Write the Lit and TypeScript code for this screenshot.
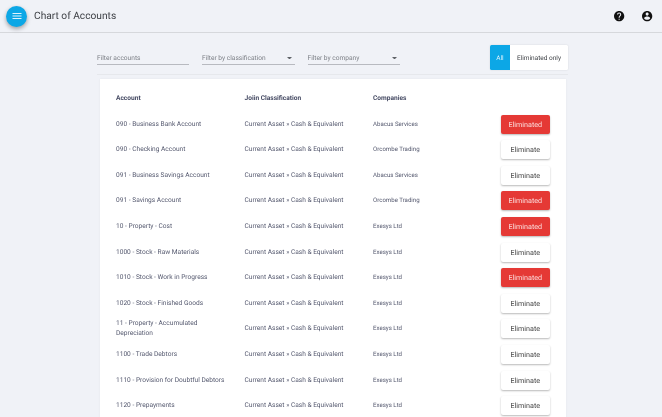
import { LitElement, html, css, svg } from "lit";
import { customElement } from "lit/decorators.js";

const CLS = "Current Asset \u00bb Cash & Equivalent";
const ROWS: [string, string, boolean][] = [
  ["090 - Business Bank Account", "Abacus Services", true],
  ["090 - Checking Account", "Orcombe Trading", false],
  ["091 - Business Savings Account", "Abacus Services", false],
  ["091 - Savings Account", "Orcombe Trading", true],
  ["10 - Property - Cost", "Exesys Ltd", true],
  ["1000 - Stock - Raw Materials", "Exesys Ltd", false],
  ["1010 - Stock - Work in Progress", "Exesys Ltd", true],
  ["1020 - Stock - Finished Goods", "Exesys Ltd", false],
  ["11 - Property - Accumulated Depreciation", "Exesys Ltd", false],
  ["1100 - Trade Debtors", "Exesys Ltd", false],
  ["1110 - Provision for Doubtful Debtors", "Exesys Ltd", false],
  ["1120 - Prepayments", "Exesys Ltd", false],
];

const arrow = svg`<svg class="arrow" viewBox="0 0 10 5" width="5" height="2.5"><path d="M0 0h10L5 5z" fill="#5f6368"/></svg>`;

@customElement("app-root")
export class AppRoot extends LitElement {
  static styles = css`
    :host {
      display: block;
      width: 662px;
      height: 417px;
      overflow: hidden;
      background: #f0f2f7;
      font-family: Roboto, "Liberation Sans", sans-serif;
      color: #54586e;
      text-rendering: geometricPrecision;
    }
    .top {
      height: 33px;
      box-sizing: border-box;
      border-bottom: 1px solid #d6d8dc;
      display: flex;
      align-items: center;
      padding: 0 9px 0 6px;
      will-change: transform;
    }
    .fab {
      width: 21px;
      height: 21px;
      border-radius: 50%;
      background: #0ca7e6;
      box-shadow: 0 2px 4px rgba(0, 0, 0, 0.35);
      display: flex;
      align-items: center;
      justify-content: center;
    }
    .title {
      margin-left: 7px;
      font-size: 10.2px;
      color: #3f4247;
      flex: 1;
    }
    .actions {
      display: flex;
      gap: 15px;
      align-items: center;
    }
    .actions svg {
      display: block;
    }
    .filters {
      box-sizing: border-box;
      margin: 12px 94px 0 97px;
      height: 30px;
      border-bottom: 1px solid #e6e8ec;
      display: flex;
      align-items: flex-start;
      will-change: transform;
    }
    .field {
      height: 15px;
      margin-top: 5px;
      padding-top: 1.5px;
      border-bottom: 1px solid #b8bac0;
      font-size: 6.6px;
      color: #7d8087;
      display: flex;
      align-items: center;
      justify-content: space-between;
      box-sizing: border-box;
    }
    .f1 { width: 92px; margin-right: 13px; }
    .f2 { width: 93px; margin-right: 12.5px; }
    .f3 { width: 92.5px; }
    .arrow { margin-right: 3px; }
    .toggle {
      margin-left: auto;
      height: 25px;
      display: flex;
      align-items: stretch;
      background: #fff;
      border-radius: 1.5px;
      box-shadow: 0 0 2px rgba(0, 0, 0, 0.12);
      font-size: 6.5px;
      color: #3f4247;
    }
    .toggle .all {
      width: 20px;
      background: #0ca7e6;
      color: #dff3fc;
      display: flex;
      align-items: center;
      justify-content: center;
      border-radius: 1.5px 0 0 1.5px;
    }
    .toggle .only {
      width: 58px;
      display: flex;
      align-items: center;
      justify-content: center;
    }
    .card {
      margin: 4px 96px 0 100px;
      background: #fff;
      padding: 6.4px 16px 0;
      box-shadow: 0 0 2px rgba(0, 0, 0, 0.06);
    }
    .row {
      display: grid;
      grid-template-columns: 128.5px 128.5px 1fr 49.5px;
      align-items: center;
      height: 25.6px;
      font-size: 6.6px;
      line-height: 9.6px;
      will-change: transform;
    }
    .head {
      font-weight: 700;
      font-size: 6.6px;
      color: #454a63;
      height: 25.2px;
    }
    .cell {
      padding-top: 1.5px;
    }
    .acc {
      padding-right: 10px;
    }
    .co {
      font-size: 6.1px;
    }
    .btn {
      height: 18.5px;
      margin-top: 1px;
      border-radius: 2px;
      display: flex;
      align-items: center;
      justify-content: center;
      font-size: 7.2px;
      background: #fff;
      color: #444;
      box-shadow: 0 1px 2px rgba(0, 0, 0, 0.28);
    }
    .btn.on {
      background: #e53935;
      color: #fbdcdc;
    }
  `;

  render() {
    return html`
      <div class="top">
        <div class="fab">
          <svg width="12" height="12" viewBox="0 0 24 24"><path fill="#dff3fc" d="M3 18h18v-2H3v2zm0-5h18v-2H3v2zm0-7v2h18V6H3z"/></svg>
        </div>
        <div class="title">Chart of Accounts</div>
        <div class="actions">
          <svg width="12.3" height="12.3" viewBox="0 0 24 24"><path fill="#111" d="M12 2C6.48 2 2 6.48 2 12s4.48 10 10 10 10-4.48 10-10S17.52 2 12 2zm1 17h-2v-2h2v2zm2.07-7.75l-.9.92C13.45 12.9 13 13.5 13 15h-2v-.5c0-1.1.45-2.1 1.17-2.83l1.24-1.26c.37-.36.59-.86.59-1.41 0-1.1-.9-2-2-2s-2 .9-2 2H8c0-2.21 1.79-4 4-4s4 1.79 4 4c0 .88-.36 1.68-.93 2.25z"/></svg>
          <svg width="12.3" height="12.3" viewBox="0 0 24 24"><path fill="#111" d="M12 2C6.48 2 2 6.48 2 12s4.48 10 10 10 10-4.48 10-10S17.52 2 12 2zm0 3c1.66 0 3 1.34 3 3s-1.34 3-3 3-3-1.34-3-3 1.34-3 3-3zm0 14.2c-2.5 0-4.71-1.28-6-3.22.03-1.99 4-3.08 6-3.08 1.99 0 5.97 1.09 6 3.08-1.29 1.94-3.5 3.22-6 3.22z"/></svg>
        </div>
      </div>
      <div class="filters">
        <div class="field f1">Filter accounts</div>
        <div class="field f2">Filter by classification ${arrow}</div>
        <div class="field f3">Filter by company ${arrow}</div>
        <div class="toggle">
          <div class="all">All</div>
          <div class="only">Eliminated only</div>
        </div>
      </div>
      <div class="card">
        <div class="row head">
          <div class="cell">Account</div>
          <div class="cell">Joiin Classification</div>
          <div class="cell">Companies</div>
          <div></div>
        </div>
        ${ROWS.map(
          ([a, c, on]) => html`
            <div class="row">
              <div class="cell acc">${a}</div>
              <div class="cell">${CLS}</div>
              <div class="cell co">${c}</div>
              <div class="btn ${on ? "on" : ""}">${on ? "Eliminated" : "Eliminate"}</div>
            </div>
          `
        )}
      </div>
    `;
  }
}
